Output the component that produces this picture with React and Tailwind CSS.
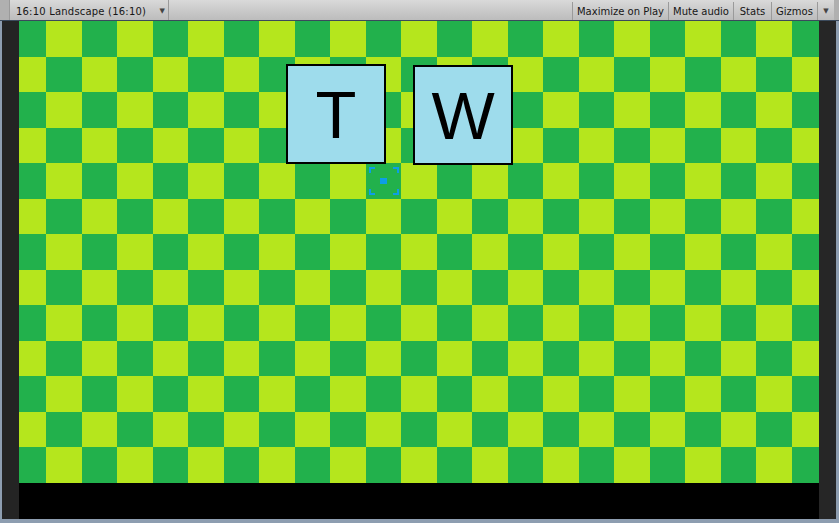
import React from 'react';

const ROWS = 13;
const COLS = 23;

function Board() {
  const cells = [];
  for (let r = 0; r < ROWS; r++) {
    for (let c = 0; c < COLS; c++) {
      cells.push(
        <div key={r + '-' + c} className={(r + c) % 2 === 0 ? 'bg-[#22b14c]' : 'bg-[#b5e61d]'} />
      );
    }
  }
  return (
    <div className="relative h-[462px] w-full">
      <div className="grid h-full w-full grid-cols-[27px_repeat(21,35.5px)_1fr] grid-rows-[repeat(13,1fr)]">
        {cells}
      </div>

      {/* UI buttons over the scene */}
      <div className="absolute left-[267px] top-[43px] flex h-[100px] w-[100px] items-center justify-center border-2 border-black bg-[#9edcec] text-[67px] leading-none text-black font-['Liberation_Sans',Arial,sans-serif]">
        T
      </div>
      <div className="absolute left-[394px] top-[44px] flex h-[100px] w-[100px] items-center justify-center border-2 border-black bg-[#9edcec] text-[67px] leading-none text-black font-['Liberation_Sans',Arial,sans-serif]">
        W
      </div>

      {/* selection gizmo */}
      <svg className="absolute left-[350px] top-[146px]" width="30" height="28" viewBox="0 0 30 28">
        <g fill="#0d9ee6">
          <rect x="0" y="0" width="6" height="2" />
          <rect x="0" y="0" width="2" height="6" />
          <rect x="24" y="0" width="6" height="2" />
          <rect x="28" y="0" width="2" height="6" />
          <rect x="0" y="26" width="6" height="2" />
          <rect x="0" y="22" width="2" height="6" />
          <rect x="24" y="26" width="6" height="2" />
          <rect x="28" y="22" width="2" height="6" />
          <rect x="11" y="11" width="7" height="6" />
        </g>
      </svg>
    </div>
  );
}

export default function App() {
  const btn = 'flex h-full items-center justify-center whitespace-nowrap border-l border-[#9a9a9a]';
  return (
    <div className="flex h-[523px] w-[839px] flex-col overflow-hidden bg-[#8d9db0] font-['DejaVu_Sans',Verdana,sans-serif] text-[10px] text-[#161616]">
      {/* toolbar */}
      <div className="flex h-[21px] shrink-0 items-stretch border-b border-[#3b4a5c] bg-gradient-to-b from-[#d9d9d9] to-[#bcbcbc]">
        <div className="w-[9px] bg-[#b0b0b0]" />
        <div className="flex w-[160px] items-center justify-between border-x border-[#9a9a9a] pl-[6px] pr-[3px] pt-[2px]">
          <span className="tracking-[0.2px]">16:10 Landscape (16:10)</span>
          <span className="text-[7px] text-[#444]">▼</span>
        </div>
        <div className="flex-1" />
        <div className="flex items-stretch pt-[2px]">
          <div className={btn + ' w-[96px]'}>Maximize on Play</div>
          <div className={btn + ' w-[65px]'}>Mute audio</div>
          <div className={btn + ' w-[38px]'}>Stats</div>
          <div className={btn + ' w-[46px]'}>Gizmos</div>
          <div className={btn + ' w-[17px] text-[7px] text-[#444]'}>▼</div>
        </div>
        <div className="w-[5px] bg-[#b0b0b0]" />
      </div>

      {/* game view */}
      <div className="flex h-[498px] shrink-0">
        <div className="w-[2px] bg-[#8d9db0]" />
        <div className="w-[17px] bg-[#242424]" />
        <div className="flex w-[800px] flex-col">
          <Board />
          <div className="h-[36px] bg-black" />
        </div>
        <div className="w-[17px] bg-[#262626]" />
        <div className="w-[3px] bg-[#8d9db0]" />
      </div>
      <div className="h-[4px] bg-[#8d9db0]" />
    </div>
  );
}
